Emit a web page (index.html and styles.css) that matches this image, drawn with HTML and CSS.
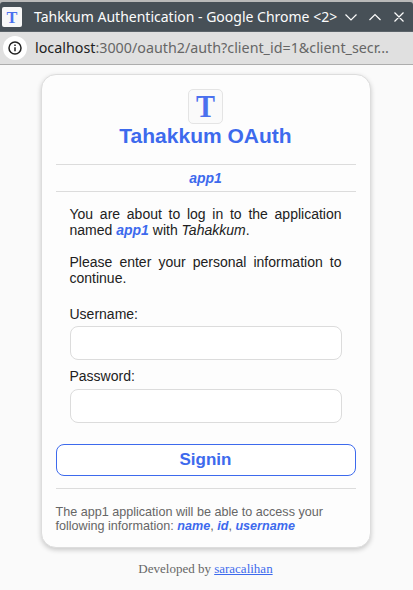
FILE: index.html
```html
<!DOCTYPE html>
<html lang="en">
<head>
<meta charset="utf-8">
<title>Tahkkum Authentication</title>
<link rel="stylesheet" href="styles.css">
</head>
<body>
<div class="backdrop">
<header class="titlebar">
  <span class="favicon"><svg width="20" height="20" viewBox="0 0 35 35"><text class="mark" x="17.5" y="28" textLength="19" lengthAdjust="spacingAndGlyphs">T</text></svg></span>
  <span class="window-title">Tahkkum Authentication - Google Chrome &lt;2&gt;</span>
  <svg class="controls" width="62" height="14" viewBox="0 0 62 14"><path d="M1.5 4.5l5.5 5.5 5.500-5.500M25.500 10l5.500-5.500 5.500 5.500M50.500 2.500l9 9M59.500 2.500l-9 9"/></svg>
</header>
</div>
<div class="address">
  <span class="info"><svg width="14" height="14" viewBox="0 0 14 14"><circle cx="7" cy="7" r="6"/><path d="M7 6.200v4M7 3.500v1.600"/></svg></span>
  <span class="url"><span class="host">localhost</span>:3000/oauth2/auth?client_id=1&amp;client_secr...</span>
</div>
<main class="card">
  <div class="logo"><svg width="33" height="33" viewBox="1 1 33 33"><text class="mark" x="17.500" y="28" textLength="19" lengthAdjust="spacingAndGlyphs">T</text></svg></div>
  <h1>Tahakkum OAuth</h1>
  <div class="app-name">app1</div>
  <form class="form">
    <p>You are about to log in to the application named <b>app1</b> with <i>Tahakkum</i>.</p>
    <p>Please enter your personal information to continue.</p>
    <label for="username">Username:</label>
    <input id="username" type="text">
    <label for="password">Password:</label>
    <input id="password" type="password">
  </form>
  <button type="button">Signin</button>
  <div class="scope">The app1 application will be able to access your following information: <b>name</b>, <b>id</b>, <b>username</b></div>
</main>
<footer>Developed by <a href="#">saracalihan</a></footer>
</body>
</html>
```
FILE: styles.css
```css
* { box-sizing: border-box; }
body {
  margin: 0;
  height: 590px;
  overflow: hidden;
  background: #fafafa;
  color: #212121;
  font: 14px/16px "Liberation Sans", Arial, sans-serif;
}
.backdrop { height: 32px; padding-top: 2px; background: #b9b9b9; }
.titlebar {
  height: 30px;
  display: flex;
  align-items: center;
  padding: 0 8px 0 2px;
  background: #475057;
  border-bottom: 1px solid #5b6369;
  border-radius: 3px 3px 0 0;
  color: #fcfcfc;
}
.favicon {
  width: 20px;
  height: 20px;
  margin-right: 12px;
  background: #f7f7f7;
  border-radius: 2px;
}
.favicon svg, .logo svg { display: block; }
.mark {
  fill: #4a70ee;
  font: bold 31px "Liberation Serif", serif;
  text-anchor: middle;
}
.window-title {
  width: 303px;
  font: 14px/20px "Noto Sans", sans-serif;
  white-space: nowrap;
}
.controls { margin-left: 7px; fill: none; stroke: #fcfcfc; stroke-width: 1.200; flex: none; }
.address {
  height: 33px;
  display: flex;
  align-items: center;
  padding-left: 3px;
  background: #e0e0e0;
  border-bottom: 1px solid #adadad;
}
.info {
  width: 24px;
  height: 24px;
  display: flex;
  align-items: center;
  justify-content: center;
  margin-right: 8px;
  border-radius: 50%;
  background: #fff;
}
.info svg { fill: none; stroke: #222; stroke-width: 1.500; }
.url { font: 14.300px/20px "Noto Sans", sans-serif; color: #666; white-space: nowrap; }
.host { color: #222; }
.card {
  width: 330px;
  height: 474px;
  margin: 9px auto 0 40.500px;
  padding: 14px;
  background: #fdfdfd;
  border: 1px solid #ddd;
  border-radius: 15px;
  box-shadow: 0 2px 5px rgba(0, 0, 0, .2);
}
.logo {
  width: 35px;
  height: 35px;
  margin: 0 auto 0 132px;
  border: 1px solid #e4e4e4;
  border-radius: 5px;
  background: #fafafa;
}
h1 {
  margin: 0 0 16px;
  color: #3d6aed;
  font-size: 21px;
  line-height: 24px;
  text-align: center;
}
.app-name {
  height: 28px;
  border: solid #dcdcdc;
  border-width: 1px 0;
  line-height: 26px;
  text-align: center;
}
.app-name, b { color: #3d6aed; font-weight: bold; font-style: italic; }
.form { padding: 14px 14px 0; }
p { margin: 0 0 16px; text-align: justify; }
label { display: block; margin-bottom: 4px; }
p + label { margin-top: 20px; }
input {
  display: block;
  width: 272px;
  height: 34px;
  margin-bottom: 8px;
  border: 1px solid #dcdcdc;
  border-radius: 8px;
  background: #fff;
}
input + label { margin-bottom: 5px; }
button {
  display: block;
  width: 300px;
  height: 32px;
  margin: 21px 0 12px;
  padding: 0;
  border: 1px solid #3d6aed;
  border-radius: 8px;
  background: #fff;
  color: #3d6aed;
  font: bold 17px/28px "Liberation Sans", Arial, sans-serif;
}
#password { margin-bottom: 0; }
.scope {
  padding-top: 16px;
  border-top: 1px solid #dcdcdc;
  color: #666;
  font-size: 12.600px;
  line-height: 14px;
}
footer {
  margin: 13px 2px 0 0;
  color: #666;
  font: 13px/16px "Liberation Serif", serif;
  text-align: center;
}
footer a { color: #3d6aed; }
```
